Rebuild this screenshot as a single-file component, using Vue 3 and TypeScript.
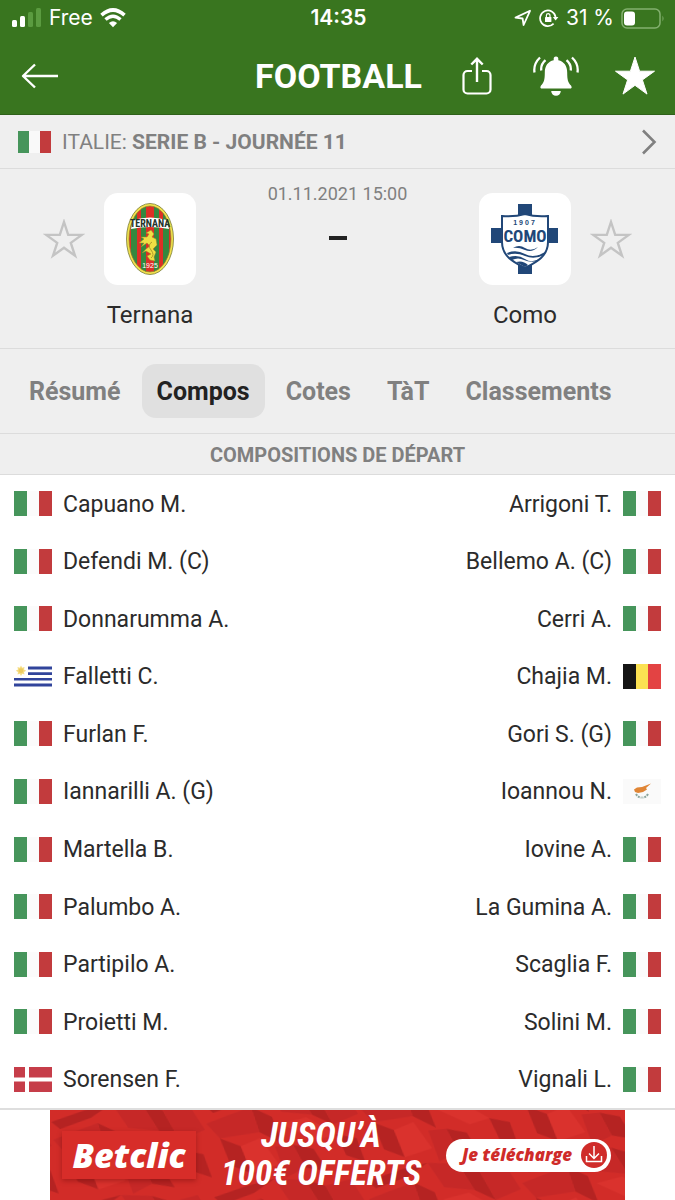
<script setup lang="ts">
type Country = 'it' | 'uy' | 'dk' | 'be' | 'cy'

interface Player {
  name: string
  country: Country
}

interface Lineup {
  team: string
  side: 'home' | 'away'
  players: Player[]
}

const tabs: string[] = ['Résumé', 'Compos', 'Cotes', 'TàT', 'Classements']
const activeTab = 'Compos'

const lineups: Lineup[] = [
  {
    team: 'Ternana',
    side: 'home',
    players: [
      { name: 'Capuano M.', country: 'it' },
      { name: 'Defendi M. (C)', country: 'it' },
      { name: 'Donnarumma A.', country: 'it' },
      { name: 'Falletti C.', country: 'uy' },
      { name: 'Furlan F.', country: 'it' },
      { name: 'Iannarilli A. (G)', country: 'it' },
      { name: 'Martella B.', country: 'it' },
      { name: 'Palumbo A.', country: 'it' },
      { name: 'Partipilo A.', country: 'it' },
      { name: 'Proietti M.', country: 'it' },
      { name: 'Sorensen F.', country: 'dk' },
    ],
  },
  {
    team: 'Como',
    side: 'away',
    players: [
      { name: 'Arrigoni T.', country: 'it' },
      { name: 'Bellemo A. (C)', country: 'it' },
      { name: 'Cerri A.', country: 'it' },
      { name: 'Chajia M.', country: 'be' },
      { name: 'Gori S. (G)', country: 'it' },
      { name: 'Ioannou N.', country: 'cy' },
      { name: 'Iovine A.', country: 'it' },
      { name: 'La Gumina A.', country: 'it' },
      { name: 'Scaglia F.', country: 'it' },
      { name: 'Solini M.', country: 'it' },
      { name: 'Vignali L.', country: 'it' },
    ],
  },
]
</script>

<template>
  <div class="page">
    <header class="top">
      <div class="status">
        <div class="status-side">
          <svg class="signal" viewBox="0 0 30 20" aria-hidden="true">
            <rect x="0" y="12" width="5" height="7" rx="1.5" fill="#fff" />
            <rect x="8" y="8" width="5" height="11" rx="1.5" fill="#fff" />
            <rect x="16" y="4" width="5" height="15" rx="1.5" fill="#5b9b40" />
            <rect x="24" y="0" width="5" height="19" rx="1.5" fill="#5b9b40" />
          </svg>
          <span>Free</span>
          <svg class="wifi" viewBox="0 0 26 20" aria-hidden="true">
            <path d="M1.5 7.2Q13-3.2 24.500 7.200" fill="none" stroke="#fff" stroke-width="3.600" />
            <path d="M5.500 11.600Q13 4.900 20.500 11.600" fill="none" stroke="#fff" stroke-width="3.400" />
            <path d="M13 19.200L8.900 15Q13 11.600 17.100 15Z" fill="#fff" />
          </svg>
        </div>
        <time class="clock">14:35</time>
        <div class="status-side status-end">
          <svg class="locate" viewBox="0 0 18 18" aria-hidden="true">
            <path d="M1.500 8.600L16 1.800L9.600 16L8.600 9.500Z" fill="none" stroke="#fff" stroke-width="1.800" stroke-linejoin="round" />
          </svg>
          <svg class="rotate" viewBox="0 0 20 18" aria-hidden="true">
            <path d="M14.600 14.600A7.800 7.800 0 1 1 16.600 8" fill="none" stroke="#fff" stroke-width="1.700" />
            <path d="M13.800 8H19.400L16.600 11.500Z" fill="#fff" />
            <rect x="6" y="8" width="6.400" height="5" rx="0.600" fill="#fff" />
            <path d="M7.400 8V6.500a1.800 1.800 0 0 1 3.600 0V8" fill="none" stroke="#fff" stroke-width="1.200" />
          </svg>
          <span>31 %</span>
          <svg class="battery" viewBox="0 0 44 21" aria-hidden="true">
            <rect x="1" y="1" width="38" height="19" rx="5" fill="none" stroke="#83b06f" stroke-width="1.500" />
            <rect x="3" y="3.500" width="11" height="14" rx="3" fill="#fff" />
            <path d="M41.500 7.500Q43.500 10.500 41.500 13.500Z" fill="#83b06f" />
          </svg>
        </div>
      </div>
      <div class="toolbar">
        <button class="icon-btn" aria-label="Retour">
          <svg class="back" viewBox="0 0 38 26" aria-hidden="true">
            <path d="M37 13H2M14 1.500L2 13L14 24.500" fill="none" stroke="#fff" stroke-width="2.400" stroke-linejoin="round" />
          </svg>
        </button>
        <h1>FOOTBALL</h1>
        <div class="actions">
          <button class="icon-btn share-btn" aria-label="Partager">
            <svg class="share" viewBox="0 0 30 38" aria-hidden="true">
              <path d="M10 14H5.500A4 4 0 0 0 1.500 18V32.500A4 4 0 0 0 5.500 36.500H24.500A4 4 0 0 0 28.500 32.500V18A4 4 0 0 0 24.500 14H20" fill="none" stroke="#fff" stroke-width="2.200" />
              <path d="M15 25V2M9.300 7.500L15 1.800L20.700 7.500" fill="none" stroke="#fff" stroke-width="2.400" />
            </svg>
          </button>
          <button class="icon-btn" aria-label="Notifications">
            <svg class="bell" viewBox="0 0 48 40" aria-hidden="true">
              <path d="M24 0.500a2.300 2.300 0 0 1 2.300 2.500V4.300C32 5.500 35.200 10 35.200 16.500C35.200 24 36 26.500 39 29.500Q40.500 31.500 39 32.500H9Q7.500 31.500 9 29.500C12 26.500 12.800 24 12.800 16.500C12.800 10 16 5.500 21.700 4.300V3A2.300 2.300 0 0 1 24 0.500Z" fill="#fff" />
              <path d="M19.200 35H28.800A4.800 4.800 0 0 1 19.200 35Z" fill="#fff" />
              <path d="M8 1.500Q1.200 8 2.500 16.500M13.500 4.200Q8.500 8.500 9.300 14.500M40 1.500Q46.800 8 45.500 16.500M34.500 4.200Q39.500 8.500 38.700 14.500" fill="none" stroke="#fff" stroke-width="2.300" />
            </svg>
          </button>
          <button class="icon-btn" aria-label="Favori">
            <svg class="star" viewBox="0 0 42 40" aria-hidden="true">
              <path d="M21 1L25.600 15.200H40.500L28.400 23.900L33 38.100L21 29.300L9 38.100L13.600 23.900L1.500 15.200H16.400Z" fill="#fff" stroke="#fff" stroke-linejoin="round" />
            </svg>
          </button>
        </div>
      </div>
    </header>

    <a class="league" href="#classements">
      <svg class="league-flag" viewBox="0 0 33 22" aria-hidden="true">
        <rect width="33" height="22" fill="#f9f9f9" />
        <rect width="11" height="22" fill="#46955b" />
        <rect x="22" width="11" height="22" fill="#c23b3d" />
      </svg>
      <span class="league-name">ITALIE: <strong>SERIE B - JOURNÉE 11</strong></span>
      <svg class="chevron" viewBox="0 0 16 26" aria-hidden="true">
        <path d="M2 1.500L13.500 13L2 24.500" fill="none" stroke="#808080" stroke-width="2.600" />
      </svg>
    </a>

    <section class="match">
      <button class="icon-btn fav" aria-label="Suivre Ternana">
        <svg class="star" viewBox="0 0 42 40" aria-hidden="true">
          <path d="M21 3L25.200 15.900H38.800L27.800 23.900L32 36.700L21 28.700L10 36.700L14.200 23.900L3.200 15.900H16.800Z" fill="none" stroke="#c4c4c4" stroke-width="2.400" />
        </svg>
      </button>
      <div class="team">
        <div class="crest">
          <svg viewBox="0 0 92 92" role="img" aria-label="Ternana">
            <defs>
              <clipPath id="oval"><ellipse cx="46" cy="46" rx="21" ry="33" /></clipPath>
            </defs>
            <ellipse cx="46" cy="46" rx="23.500" ry="35.500" fill="#f3e24d" stroke="#777b35" stroke-width="0.800" />
            <g clip-path="url(#oval)">
              <rect x="22" y="10" width="50" height="72" fill="#dc3026" />
              <path d="M27 10H33V82H27ZM37 10H42V82H37ZM50 10H55V82H50ZM59 10H65V82H59Z" fill="#34883f" />
            </g>
            <ellipse cx="46" cy="46" rx="21" ry="33" fill="none" stroke="#8d8335" stroke-width="0.700" />
            <path d="M29 27Q46 22 63 27L65 36Q46 32 27 36Z" fill="#fff" />
            <text x="46" y="34" text-anchor="middle" font-family="Roboto Condensed, Roboto" font-weight="700" font-size="10" fill="#26332b">TERNANA</text>
            <path d="M47 37L50 41L48 44L52 46L53 52L49 56L52 59L50 64L51 68L46 67L43 63L47 61L42 58L38 60L42 56L46 53L43 50L37 54L40 50L35 50L40 46L37 44L43 44L45 41L42 40Z" fill="#efdf44" stroke="#99872c" stroke-width="0.500" />
            <path d="M48 49Q43 52 47 57T47 65" fill="none" stroke="#b09b2c" />
            <text x="46" y="75" text-anchor="middle" font-family="Liberation Sans" font-size="7" fill="#fff">1925</text>
          </svg>
        </div>
        <span class="team-name">Ternana</span>
      </div>
      <div class="score">
        <time>01.11.2021 15:00</time>
        <span class="dash"></span>
      </div>
      <div class="team">
        <div class="crest">
          <svg viewBox="0 0 92 92" role="img" aria-label="Como">
            <path d="M39 11H53V81H39ZM12 35H79V50H12Z" fill="#214778" />
            <path d="M23 23Q36 24 46 21Q56 24 69 23V49C69 63 58 69 46 75C34 69 23 63 23 49Z" fill="#fff" stroke="#214778" stroke-width="2" />
            <text x="46" y="32" text-anchor="middle" font-family="Liberation Sans" font-weight="700" font-size="7" letter-spacing="2" fill="#214778">1907</text>
            <text x="46" y="49" text-anchor="middle" font-family="Roboto Condensed, Roboto" font-weight="700" font-size="17" fill="#214778">COMO</text>
            <path d="M34 55Q40 51 46 55T59 54Q53 60 46 57T34 55ZM28 60Q37 56 46 61T66 59L65 62Q55 67 46 63T29 62ZM30 64Q39 61 46 66T62 65L59 68Q51 70 45 67T33 67ZM37 69Q44 67 49 72L46 74Z" fill="#214778" />
          </svg>
        </div>
        <span class="team-name">Como</span>
      </div>
      <button class="icon-btn fav" aria-label="Suivre Como">
        <svg class="star" viewBox="0 0 42 40" aria-hidden="true">
          <path d="M21 3L25.200 15.900H38.800L27.800 23.900L32 36.700L21 28.700L10 36.700L14.200 23.900L3.200 15.900H16.800Z" fill="none" stroke="#c4c4c4" stroke-width="2.400" />
        </svg>
      </button>
    </section>

    <nav class="tabs">
      <button v-for="tab in tabs" :key="tab" class="tab" :class="{ active: tab === activeTab }">{{ tab }}</button>
    </nav>

    <h2>COMPOSITIONS DE DÉPART</h2>

    <main class="lineups">
      <ul v-for="lineup in lineups" :key="lineup.side" :class="lineup.side" :aria-label="lineup.team">
        <li v-for="player in lineup.players" :key="player.name">
          <svg class="flag" viewBox="0 0 38 25" aria-hidden="true">
            <template v-if="player.country === 'it'">
              <rect width="38" height="25" fill="#fbfbfb" />
              <rect width="13" height="25" fill="#46955b" />
              <rect x="25" width="13" height="25" fill="#c23b3d" />
            </template>
            <template v-else-if="player.country === 'be'">
              <rect width="13" height="25" fill="#151515" />
              <rect x="13" width="12" height="25" fill="#fbe152" />
              <rect x="25" width="13" height="25" fill="#e34343" />
            </template>
            <template v-else-if="player.country === 'dk'">
              <rect width="38" height="25" fill="#c63d49" />
              <path d="M11 0H15V25H11ZM0 10.500H38V14.500H0Z" fill="#fff" />
            </template>
            <template v-else-if="player.country === 'uy'">
              <path d="M14 2.500H38V5.500H14ZM14 8.200H38V11H14ZM0 14H38V16.600H0ZM0 19.600H38V22.400H0Z" fill="#31449b" />
              <path d="M7 1.500L8.200 3.800L10.500 3L10 5.500L12.200 6.700L10 8L10.500 10.500L8.200 9.700L7 12L5.800 9.700L3.500 10.500L4 8L1.800 6.700L4 5.500L3.500 3L5.800 3.800Z" fill="#f6dd83" />
              <circle cx="7" cy="6.700" r="2.400" fill="#eccb60" />
            </template>
            <template v-else>
              <rect width="38" height="25" fill="#fafafa" />
              <path d="M11 10.500L14 8.500L19 8L28 4.500L23 9L24 10.500L20 13L15 14L12 13Z" fill="#e08535" />
              <path d="M13 15Q15 18.500 18.500 18.500M25 15Q23 18.500 19.500 18.500" fill="none" stroke="#8aa59c" stroke-width="2" stroke-dasharray="2 1" />
            </template>
          </svg>
          <span class="player-name">{{ player.name }}</span>
        </li>
      </ul>
    </main>

    <footer class="ad-strip">
      <a class="ad" href="#betclic">
        <svg class="ad-bg" viewBox="0 0 575 90" preserveAspectRatio="xMidYMid slice" aria-hidden="true">
          <defs>
            <pattern id="facets" width="154" height="92" patternUnits="userSpaceOnUse" patternTransform="rotate(-6)">
              <rect width="154" height="92" fill="#d22c28" />
              <path d="M0 12L34 4L62 0L40 12L8 20ZM92 4L112 12L126 44L106 32ZM46 18L66 30L74 58L52 44ZM12 46L32 56L40 84L20 74ZM84 60L104 66L116 90L94 84ZM128 54L148 60L154 84L136 76Z" fill="#b52322" />
              <path d="M62 0L92 4L106 32L76 26ZM112 12L138 8L152 36L126 44ZM0 30L22 24L46 18L52 44L12 46ZM66 60L84 60L94 84L74 92Z" fill="#c62827" />
              <path d="M74 38L100 34L128 54L108 58ZM32 56L52 50L68 78L40 84Z" fill="#da322d" />
            </pattern>
          </defs>
          <rect width="575" height="90" fill="url(#facets)" />
        </svg>
        <span class="brand">Betclic</span>
        <span class="offer">JUSQU’À<br />100€ OFFERTS</span>
        <span class="cta">
          Je télécharge
          <svg class="download" viewBox="0 0 28 28" aria-hidden="true">
            <circle cx="14" cy="14" r="13" fill="#cf2b29" />
            <path d="M14 5V17M9 12.500L14 17.500L19 12.500M6.500 15V20.500H21.500V15" fill="none" stroke="#fff" stroke-width="1.500" />
          </svg>
        </span>
      </a>
    </footer>
  </div>
</template>

<style>
body {
  background: #fff;
}
</style>

<style scoped>
* {
  box-sizing: border-box;
}

.page {
  display: flex;
  flex-direction: column;
  min-height: 100vh;
  font-family: Roboto, "Liberation Sans", sans-serif;
  color: #2b2b2b;
}

svg {
  display: block;
  flex: none;
}

.icon-btn {
  display: block;
  padding: 0;
  border: 0;
  background: none;
}

.top {
  background: #39751f;
  color: #fff;
  border-bottom: 1px solid #2f611a;
}

.status {
  display: grid;
  grid-template-columns: 1fr auto 1fr;
  align-items: center;
  height: 36px;
  padding: 0 10px 0 12px;
  font: 21px/36px Inter, sans-serif;
}

.status-side {
  display: flex;
  align-items: center;
  gap: 7px;
}

.status-end {
  justify-content: flex-end;
}

.clock {
  font-weight: 600;
}

.signal { width: 30px; height: 20px; }
.wifi { width: 26px; height: 20px; }
.locate { width: 18px; height: 18px; }
.rotate { width: 20px; height: 18px; }
.battery { width: 44px; height: 21px; }

.toolbar {
  display: grid;
  grid-template-columns: 1fr auto 1fr;
  align-items: center;
  height: 78px;
  padding: 2px 19px 0 21px;
}

h1 {
  margin: 0;
  font-size: 34px;
  line-height: 40px;
  font-weight: 700;
}

.actions {
  display: flex;
  align-items: center;
  justify-content: flex-end;
  gap: 34px;
}

.share-btn {
  margin-right: 6px;
}

.back { width: 38px; height: 26px; }
.share { width: 30px; height: 38px; }
.bell { width: 48px; height: 40px; }
.star { width: 42px; height: 40px; }

.league {
  display: flex;
  align-items: center;
  gap: 11px;
  height: 54px;
  padding: 1px 18px 0;
  background: #efefef;
  border-bottom: 1px solid #dcdcdc;
  color: #808080;
  text-decoration: none;
  font-size: 21px;
  line-height: 28px;
}

.league-name {
  flex: 1;
}

.league-flag { width: 33px; height: 22px; }
.chevron { width: 16px; height: 26px; }

.match {
  display: grid;
  grid-template-columns: auto auto 1fr auto auto;
  padding: 24px 43px 17px 43px;
  background: #efefef;
  border-bottom: 1px solid #dcdcdc;
}

.fav {
  align-self: start;
  margin-top: 26px;
}

.team {
  display: flex;
  flex-direction: column;
  align-items: center;
  gap: 14px;
  width: 92px;
  margin: 0 19px;
}

.crest {
  width: 92px;
  height: 92px;
  border-radius: 14px;
  background: #fff;
}

.team-name {
  font-size: 24px;
  line-height: 32px;
}

.score {
  display: flex;
  flex-direction: column;
  align-items: center;
  gap: 30px;
  margin-top: -11px;
  color: #808080;
  font-size: 18px;
  line-height: 24px;
  white-space: nowrap;
}

.dash {
  width: 18px;
  height: 4px;
  background: #222;
}

.tabs {
  display: flex;
  gap: 6px;
  padding: 15px 14px;
  background: #efefef;
  border-bottom: 1px solid #dcdcdc;
}

.tab {
  height: 54px;
  padding: 2px 15px 0;
  border: 0;
  border-radius: 14px;
  background: none;
  color: #808080;
  font: 700 25px/52px Roboto, "Liberation Sans", sans-serif;
}

.tab.active {
  background: #e0e0e0;
  color: #222;
}

h2 {
  margin: 0;
  padding: 6px 0 4px;
  background: #efefef;
  border-bottom: 1px solid #dcdcdc;
  color: #808080;
  text-align: center;
  font-size: 20px;
  line-height: 30px;
  font-weight: 700;
}

.lineups {
  flex: 1;
  display: grid;
  grid-template-columns: 1fr 1fr;
  padding: 0 14px;
}

ul {
  display: grid;
  grid-auto-rows: 1fr;
  margin: 0;
  padding: 0;
  list-style: none;
}

li {
  display: flex;
  align-items: center;
  gap: 11px;
  font-size: 23px;
  line-height: 32px;
}

.away li {
  flex-direction: row-reverse;
}

.player-name {
  padding-top: 2px;
}

.flag { width: 38px; height: 25px; }

.ad-strip {
  border-top: 2px solid #dedede;
}

.ad {
  position: relative;
  display: flex;
  align-items: center;
  justify-content: space-between;
  max-width: 575px;
  height: 90px;
  margin: 0 auto;
  padding: 0 14px 0 12px;
  overflow: hidden;
  background: #d22c28;
  color: #fff;
  text-decoration: none;
}

.ad-bg {
  position: absolute;
  inset: 0;
  width: 100%;
  height: 100%;
}

.brand,
.offer,
.cta {
  position: relative;
}

.brand {
  width: 134px;
  background: #d72d29;
  box-shadow: 0 2px 5px rgba(90, 0, 0, 0.35);
  text-align: center;
  font: italic 800 34px/48px "Open Sans", sans-serif;
}

.offer {
  text-align: center;
  white-space: nowrap;
  font: italic 700 35px/38px "Roboto Condensed", Roboto, sans-serif;
}

.cta {
  display: flex;
  align-items: center;
  gap: 8px;
  height: 33px;
  padding: 0 3px 0 16px;
  border-radius: 17px;
  background: #fff;
  color: #cf2b29;
  white-space: nowrap;
  font: italic 800 17px/32px "Open Sans", sans-serif;
}

.download { width: 28px; height: 28px; }
</style>
